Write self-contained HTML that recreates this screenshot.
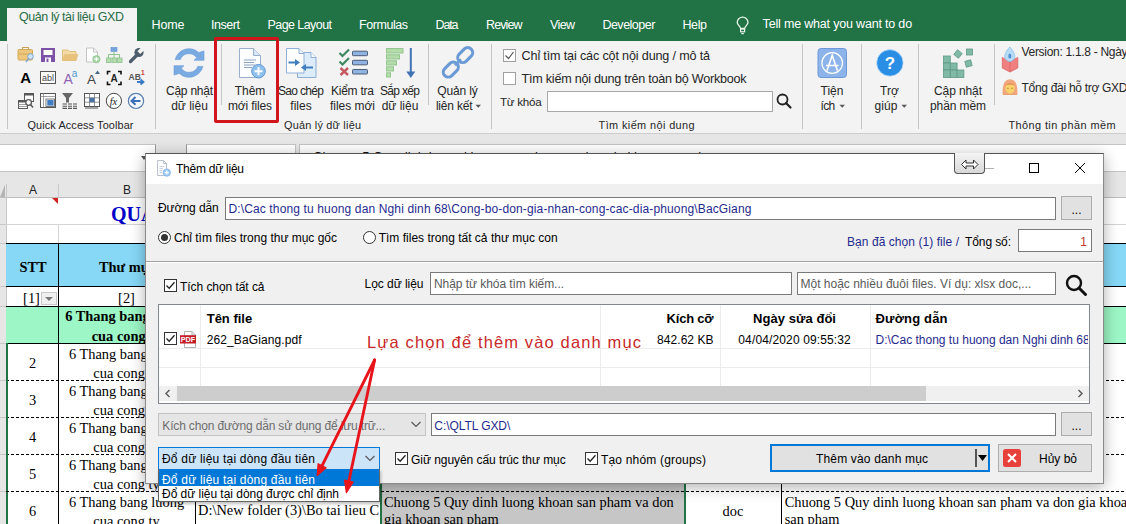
<!DOCTYPE html>
<html><head><meta charset="utf-8"><style>
html,body{margin:0;padding:0;}
body{width:1126px;height:524px;overflow:hidden;position:relative;background:#fff;font-family:"Liberation Sans",sans-serif;}
.t{position:absolute;white-space:pre;}

</style></head><body>
<div style="position:absolute;left:0px;top:133px;width:1126px;height:11px;background:#e6e6e6;"></div>
<div style="position:absolute;left:0px;top:144px;width:1126px;height:28px;background:#e6e6e6;"></div>
<div style="position:absolute;left:0px;top:144px;width:156px;height:28px;background:#fff;border:1px solid #c4c4c4;border-left:none;border-right-color:#9a9a9a;box-sizing:border-box;"></div>
<div style="position:absolute;left:186px;top:144px;width:110px;height:28px;background:#fff;border:1px solid #c4c4c4;border-left-color:#9a9a9a;box-sizing:border-box;"></div>
<div style="position:absolute;left:299px;top:144px;width:827px;height:28px;background:#fff;border:1px solid #c4c4c4;border-right:none;box-sizing:border-box;"></div>
<div class="t" style="left:313.00px;top:147.30px;font-size:13px;line-height:20px;color:#111;">Chuong 5 Quy dinh luong khoan san pham va don gia khoan san pham</div>
<svg style="position:absolute;left:140px;top:155px" width="8" height="6"><polygon points="1,1 7,1 4,5" fill="#555"/></svg>
<div style="position:absolute;left:0px;top:172px;width:1126px;height:26px;background:#e6e6e6;border-bottom:1px solid #bdbdbd;box-sizing:border-box;"></div>
<div style="position:absolute;left:6px;top:184px;width:1px;height:14px;background:#c8c8c8;"></div>
<div style="position:absolute;left:58px;top:184px;width:1px;height:14px;background:#c8c8c8;"></div>
<div class="t" style="left:28.99px;top:180.34px;font-size:12px;line-height:20px;color:#222;">A</div>
<div class="t" style="left:122.99px;top:180.34px;font-size:12px;line-height:20px;color:#222;">B</div>
<svg style="position:absolute;left:0;top:184px" width="6" height="14"><polygon points="5,1 5,13 0,13" fill="#b4b4b4"/></svg>
<div style="position:absolute;left:0px;top:198px;width:7px;height:326px;background:#e6e6e6;border-right:1px solid #c8c8c8;box-sizing:border-box;"></div>
<div style="position:absolute;left:0px;top:224px;width:6px;height:1px;background:#c8c8c8;"></div>
<div style="position:absolute;left:0px;top:243px;width:6px;height:1px;background:#c8c8c8;"></div>
<div style="position:absolute;left:0px;top:286px;width:6px;height:1px;background:#c8c8c8;"></div>
<div style="position:absolute;left:0px;top:306px;width:6px;height:1px;background:#c8c8c8;"></div>
<div style="position:absolute;left:0px;top:343px;width:6px;height:1px;background:#c8c8c8;"></div>
<div style="position:absolute;left:0px;top:380px;width:6px;height:1px;background:#c8c8c8;"></div>
<div style="position:absolute;left:0px;top:417px;width:6px;height:1px;background:#c8c8c8;"></div>
<div style="position:absolute;left:0px;top:454px;width:6px;height:1px;background:#c8c8c8;"></div>
<div style="position:absolute;left:0px;top:491px;width:6px;height:1px;background:#c8c8c8;"></div>
<svg style="position:absolute;left:52px;top:198px" width="6" height="6"><polygon points="0,0 6,0 6,6" fill="#d32020"/></svg>
<div style="position:absolute;left:6px;top:224px;width:1120px;height:1px;background:#d4d4d4;"></div>
<div style="position:absolute;left:58px;top:224px;width:1px;height:19px;background:#d4d4d4;"></div>
<div style="position:absolute;left:6px;top:243px;width:1120px;height:43px;background:#86d8f6;"></div>
<div style="position:absolute;left:6px;top:243px;width:1120px;height:1px;background:#000;"></div>
<div style="position:absolute;left:6px;top:286px;width:1120px;height:1px;background:#000;"></div>
<div style="position:absolute;left:6px;top:306px;width:1120px;height:1px;background:#000;"></div>
<div style="position:absolute;left:6px;top:307px;width:1120px;height:36px;background:#9cf6c5;"></div>
<div style="position:absolute;left:6px;top:343px;width:1120px;height:1px;background:#000;"></div>
<div style="position:absolute;left:58px;top:243px;width:1px;height:281px;background:#000;"></div>
<div style="position:absolute;left:6px;top:380px;width:1120px;height:1px;background:repeating-linear-gradient(90deg,#000 0 3px,transparent 3px 5px);"></div>
<div style="position:absolute;left:6px;top:417px;width:1120px;height:1px;background:repeating-linear-gradient(90deg,#000 0 3px,transparent 3px 5px);"></div>
<div style="position:absolute;left:6px;top:454px;width:1120px;height:1px;background:repeating-linear-gradient(90deg,#000 0 3px,transparent 3px 5px);"></div>
<div style="position:absolute;left:6px;top:491px;width:1120px;height:1px;background:repeating-linear-gradient(90deg,#000 0 3px,transparent 3px 5px);"></div>
<div style="position:absolute;left:6px;top:343px;width:2px;height:181px;background:#217346;"></div>
<div style="position:absolute;left:381px;top:484px;width:304px;height:40px;background:#c6c6c6;"></div>
<div style="position:absolute;left:380px;top:484px;width:2px;height:40px;background:#217346;"></div>
<div style="position:absolute;left:684px;top:484px;width:2px;height:40px;background:#217346;"></div>
<div style="position:absolute;left:195px;top:484px;width:1px;height:40px;background:#000;"></div>
<div style="position:absolute;left:781px;top:484px;width:1px;height:40px;background:#000;"></div>
<div style="position:absolute;left:6px;top:491px;width:1120px;height:1px;background:repeating-linear-gradient(90deg,#000 0 3px,transparent 3px 5px);"></div>
<div class="t" style="left:111.00px;top:198.05px;font-size:20px;line-height:32px;color:#0000c8;font-weight:700;font-family:'Liberation Serif';">QUA</div>
<div class="t" style="left:19.40px;top:254.64px;font-size:14.4px;line-height:24px;color:#000;font-weight:700;font-family:'Liberation Serif';">STT</div>
<div class="t" style="left:98.89px;top:254.64px;font-size:14.4px;line-height:24px;color:#000;font-weight:700;font-family:'Liberation Serif';">Thư mục</div>
<div class="t" style="left:23.11px;top:286.14px;font-size:14.4px;line-height:24px;color:#000;font-family:'Liberation Serif';">[1]</div>
<div style="position:absolute;left:41px;top:292px;width:16px;height:13px;background:#f0f0f0;border:1px solid #c8c8c8;box-sizing:border-box;"></div>
<svg style="position:absolute;left:41px;top:292px" width="16" height="13"><polygon points="4,5 12,5 8,9" fill="#7a7a7a"/></svg>
<div class="t" style="left:118.11px;top:286.14px;font-size:14.4px;line-height:24px;color:#000;font-family:'Liberation Serif';">[2]</div>
<div class="t" style="left:65.23px;top:304.44px;font-size:14.4px;line-height:24px;color:#000;font-weight:700;font-family:'Liberation Serif';">6 Thang bang luong</div>
<div class="t" style="left:91.72px;top:323.94px;font-size:14.4px;line-height:24px;color:#000;font-weight:700;font-family:'Liberation Serif';">cua cong ty</div>
<div class="t" style="left:28.90px;top:350.94px;font-size:14.4px;line-height:24px;color:#000;font-family:'Liberation Serif';">2</div>
<div class="t" style="left:68.88px;top:341.74px;font-size:14.4px;line-height:24px;color:#000;font-family:'Liberation Serif';">6 Thang bang luong</div>
<div class="t" style="left:93.33px;top:360.54px;font-size:14.4px;line-height:24px;color:#000;font-family:'Liberation Serif';">cua cong ty</div>
<div class="t" style="left:28.90px;top:387.94px;font-size:14.4px;line-height:24px;color:#000;font-family:'Liberation Serif';">3</div>
<div class="t" style="left:68.88px;top:378.74px;font-size:14.4px;line-height:24px;color:#000;font-family:'Liberation Serif';">6 Thang bang luong</div>
<div class="t" style="left:93.33px;top:397.54px;font-size:14.4px;line-height:24px;color:#000;font-family:'Liberation Serif';">cua cong ty</div>
<div class="t" style="left:28.90px;top:424.94px;font-size:14.4px;line-height:24px;color:#000;font-family:'Liberation Serif';">4</div>
<div class="t" style="left:68.88px;top:415.74px;font-size:14.4px;line-height:24px;color:#000;font-family:'Liberation Serif';">6 Thang bang luong</div>
<div class="t" style="left:93.33px;top:434.54px;font-size:14.4px;line-height:24px;color:#000;font-family:'Liberation Serif';">cua cong ty</div>
<div class="t" style="left:28.90px;top:461.94px;font-size:14.4px;line-height:24px;color:#000;font-family:'Liberation Serif';">5</div>
<div class="t" style="left:68.88px;top:452.74px;font-size:14.4px;line-height:24px;color:#000;font-family:'Liberation Serif';">6 Thang bang luong</div>
<div class="t" style="left:93.33px;top:471.54px;font-size:14.4px;line-height:24px;color:#000;font-family:'Liberation Serif';">cua cong ty</div>
<div class="t" style="left:28.90px;top:498.94px;font-size:14.4px;line-height:24px;color:#000;font-family:'Liberation Serif';">6</div>
<div class="t" style="left:68.88px;top:489.74px;font-size:14.4px;line-height:24px;color:#000;font-family:'Liberation Serif';">6 Thang bang luong</div>
<div class="t" style="left:93.33px;top:508.54px;font-size:14.4px;line-height:24px;color:#000;font-family:'Liberation Serif';">cua cong ty</div>
<div class="t" style="left:198.00px;top:497.74px;font-size:14.4px;line-height:24px;color:#000;font-family:'Liberation Serif';width:182.00px;overflow:hidden;">D:\New folder (3)\Bo tai lieu C</div>
<div class="t" style="left:384.00px;top:489.54px;font-size:14.4px;line-height:24px;color:#000;font-family:'Liberation Serif';">Chuong 5 Quy dinh luong khoan san pham va don</div>
<div class="t" style="left:384.00px;top:507.14px;font-size:14.4px;line-height:24px;color:#000;font-family:'Liberation Serif';">gia khoan san pham</div>
<div class="t" style="left:722.61px;top:498.74px;font-size:14.4px;line-height:24px;color:#000;font-family:'Liberation Serif';">doc</div>
<div class="t" style="left:784.70px;top:489.54px;font-size:14.4px;line-height:24px;color:#000;font-family:'Liberation Serif';">Chuong 5 Quy dinh luong khoan san pham va don gia khoan</div>
<div class="t" style="left:784.70px;top:507.14px;font-size:14.4px;line-height:24px;color:#000;font-family:'Liberation Serif';">san pham</div>
<div style="position:absolute;left:0px;top:0px;width:1126px;height:41px;background:#217346;"></div>
<div style="position:absolute;left:7px;top:8px;width:130px;height:34px;background:#f3f3f3;"></div>
<div class="t" style="left:19.00px;top:6.67px;font-size:12.5px;line-height:20px;color:#2a6e47;letter-spacing:-0.434px;">Quản lý tài liệu GXD</div>
<div class="t" style="left:151.50px;top:14.67px;font-size:12.5px;line-height:20px;color:#fff;letter-spacing:-0.115px;">Home</div>
<div class="t" style="left:211.00px;top:14.67px;font-size:12.5px;line-height:20px;color:#fff;letter-spacing:-0.453px;">Insert</div>
<div class="t" style="left:267.50px;top:14.67px;font-size:12.5px;line-height:20px;color:#fff;letter-spacing:-0.570px;">Page Layout</div>
<div class="t" style="left:359.00px;top:14.67px;font-size:12.5px;line-height:20px;color:#fff;letter-spacing:-0.442px;">Formulas</div>
<div class="t" style="left:435.50px;top:14.67px;font-size:12.5px;line-height:20px;color:#fff;letter-spacing:-1.135px;">Data</div>
<div class="t" style="left:486.00px;top:14.67px;font-size:12.5px;line-height:20px;color:#fff;letter-spacing:-0.900px;">Review</div>
<div class="t" style="left:550.00px;top:14.67px;font-size:12.5px;line-height:20px;color:#fff;letter-spacing:-0.625px;">View</div>
<div class="t" style="left:602.40px;top:14.67px;font-size:12.5px;line-height:20px;color:#fff;letter-spacing:-0.498px;">Developer</div>
<div class="t" style="left:682.50px;top:14.67px;font-size:12.5px;line-height:20px;color:#fff;letter-spacing:-0.406px;">Help</div>
<div class="t" style="left:762.60px;top:14.17px;font-size:12.5px;line-height:20px;color:#fff;letter-spacing:-0.183px;">Tell me what you want to do</div>
<div style="position:absolute;left:0px;top:41px;width:1126px;height:92px;background:#f3f3f3;"></div>
<div style="position:absolute;left:0px;top:133px;width:1126px;height:1px;background:#cdcdcd;"></div>
<div style="position:absolute;left:7px;top:44px;width:1px;height:85px;background:#c6c6c6;"></div>
<div style="position:absolute;left:155px;top:44px;width:1px;height:85px;background:#c6c6c6;"></div>
<div style="position:absolute;left:221px;top:44px;width:1px;height:61px;background:#c6c6c6;"></div>
<div style="position:absolute;left:428px;top:44px;width:1px;height:61px;background:#c6c6c6;"></div>
<div style="position:absolute;left:491px;top:44px;width:1px;height:85px;background:#c6c6c6;"></div>
<div style="position:absolute;left:802px;top:44px;width:1px;height:85px;background:#c6c6c6;"></div>
<div style="position:absolute;left:861px;top:44px;width:1px;height:85px;background:#c6c6c6;"></div>
<div style="position:absolute;left:918px;top:44px;width:1px;height:85px;background:#c6c6c6;"></div>
<div style="position:absolute;left:994px;top:44px;width:1px;height:61px;background:#c6c6c6;"></div>
<div class="t" style="left:27.50px;top:116.42px;font-size:10.9px;line-height:18px;color:#262626;letter-spacing:0.109px;">Quick Access Toolbar</div>
<div class="t" style="left:166.00px;top:81.14px;font-size:12px;line-height:20px;color:#262626;letter-spacing:-0.243px;">Cập nhật</div>
<div class="t" style="left:171.13px;top:96.24px;font-size:12px;line-height:20px;color:#262626;">dữ liệu</div>
<div class="t" style="left:234.66px;top:81.14px;font-size:12px;line-height:20px;color:#262626;">Thêm</div>
<div class="t" style="left:228.00px;top:96.24px;font-size:12px;line-height:20px;color:#262626;letter-spacing:-0.152px;">mới files</div>
<div class="t" style="left:278.00px;top:81.14px;font-size:12px;line-height:20px;color:#262626;letter-spacing:-0.674px;">Sao chép</div>
<div class="t" style="left:290.33px;top:96.24px;font-size:12px;line-height:20px;color:#262626;">files</div>
<div class="t" style="left:331.00px;top:81.14px;font-size:12px;line-height:20px;color:#262626;letter-spacing:-0.241px;">Kiểm tra</div>
<div class="t" style="left:330.00px;top:96.24px;font-size:12px;line-height:20px;color:#262626;letter-spacing:-0.027px;">files mới</div>
<div class="t" style="left:380.00px;top:81.14px;font-size:12px;line-height:20px;color:#262626;letter-spacing:-0.674px;">Sắp xếp</div>
<div class="t" style="left:381.63px;top:96.24px;font-size:12px;line-height:20px;color:#262626;">dữ liệu</div>
<div class="t" style="left:437.25px;top:81.14px;font-size:12px;line-height:20px;color:#262626;letter-spacing:-0.143px;">Quản lý</div>
<div class="t" style="left:435.90px;top:96.24px;font-size:12px;line-height:20px;color:#262626;letter-spacing:-0.190px;">liên kết</div>
<svg style="position:absolute;left:475px;top:104px" width="7" height="5"><polygon points="0.5,0.8 6,0.8 3.25,3.8" fill="#555"/></svg>
<div class="t" style="left:284.00px;top:116.42px;font-size:10.9px;line-height:18px;color:#262626;letter-spacing:0.222px;">Quản lý dữ liệu</div>
<div class="t" style="left:521.60px;top:46.43px;font-size:12.6px;line-height:20px;color:#262626;letter-spacing:-0.154px;">Chỉ tìm tại các cột nội dung / mô tả</div>
<div class="t" style="left:521.60px;top:69.23px;font-size:12.6px;line-height:20px;color:#262626;letter-spacing:-0.244px;">Tìm kiếm nội dung trên toàn bộ Workbook</div>
<div class="t" style="left:500.00px;top:92.58px;font-size:11.6px;line-height:18px;color:#262626;letter-spacing:-0.270px;">Từ khóa</div>
<div class="t" style="left:598.60px;top:116.42px;font-size:10.9px;line-height:18px;color:#262626;letter-spacing:0.400px;">Tìm kiếm nội dung</div>
<div class="t" style="left:820.55px;top:81.14px;font-size:12px;line-height:20px;color:#262626;">Tiện</div>
<div class="t" style="left:820.50px;top:96.24px;font-size:12px;line-height:20px;color:#262626;letter-spacing:-0.608px;">ích</div>
<svg style="position:absolute;left:838.5px;top:104px" width="7" height="5"><polygon points="0.5,0.8 6,0.8 3.25,3.8" fill="#555"/></svg>
<div class="t" style="left:880.12px;top:81.14px;font-size:12px;line-height:20px;color:#262626;">Trợ</div>
<div class="t" style="left:874.50px;top:96.24px;font-size:12px;line-height:20px;color:#262626;letter-spacing:0.038px;">giúp</div>
<svg style="position:absolute;left:900.5px;top:104px" width="7" height="5"><polygon points="0.5,0.8 6,0.8 3.25,3.8" fill="#555"/></svg>
<div class="t" style="left:934.00px;top:81.14px;font-size:12px;line-height:20px;color:#262626;letter-spacing:-0.100px;">Cập nhật</div>
<div class="t" style="left:930.00px;top:96.24px;font-size:12px;line-height:20px;color:#262626;letter-spacing:-0.100px;">phần mềm</div>
<div class="t" style="left:1021.50px;top:42.34px;font-size:12px;line-height:20px;color:#262626;letter-spacing:-0.3px;">Version: 1.1.8 - Ngày cập nhật</div>
<div class="t" style="left:1021.50px;top:77.54px;font-size:12px;line-height:20px;color:#262626;letter-spacing:-0.293px;">Tổng đài hỗ trợ GXD</div>
<div class="t" style="left:1008.50px;top:116.42px;font-size:10.9px;line-height:18px;color:#262626;letter-spacing:0.418px;">Thông tin phần mềm</div>
<div style="position:absolute;left:503px;top:49px;width:13px;height:13px;border:1px solid #a0a0a0;background:#fff;box-sizing:border-box;"></div>
<div style="position:absolute;left:503px;top:72px;width:13px;height:13px;border:1px solid #a0a0a0;background:#fff;box-sizing:border-box;"></div>
<svg style="position:absolute;left:503px;top:49px" width="13" height="13"><polyline points="2.5,6.5 5.5,9.5 10.5,3" fill="none" stroke="#555" stroke-width="1.2"/></svg>
<div style="position:absolute;left:547px;top:91px;width:226px;height:21px;border:1px solid #a8a8a8;background:#fff;box-sizing:border-box;"></div>
<svg style="position:absolute;left:775px;top:92px" width="18" height="18"><circle cx="7.5" cy="7.5" r="5" fill="none" stroke="#222" stroke-width="1.8"/><line x1="11" y1="11" x2="15.5" y2="15.5" stroke="#222" stroke-width="2.2" stroke-linecap="round"/></svg>
<div style="position:absolute;left:214px;top:37px;width:65px;height:86px;border:3px solid #d2141c;box-sizing:border-box;border-radius:2px;"></div>
<svg style="position:absolute;left:734px;top:15px" width="18" height="22" viewBox="734 14 18 22">
<path d="M740.6 27.5 C740.4 25.2 737.2 23.8 737.2 21.5 A5.4 5.4 0 0 1 748 21.5 C748 23.8 744.8 25.2 744.6 27.5 Z" fill="none" stroke="#e6f5e8" stroke-width="1.3"/>
<rect x="740.6" y="28" width="4" height="2.8" fill="none" stroke="#e6f5e8" stroke-width="1.2"/>
<line x1="741.3" y1="32.6" x2="743.9" y2="32.6" stroke="#e6f5e8" stroke-width="1.2"/>
</svg>
<svg style="position:absolute;left:0px;top:40px;overflow:visible" width="160" height="75" viewBox="0 0 160 75">
<g transform="translate(0,-40)">
<!-- briefcase -->
<rect x="22.5" y="47.5" width="6" height="3" fill="none" stroke="#c9a25a" stroke-width="1"/>
<rect x="18" y="49.5" width="14.5" height="10.5" rx="1" fill="#eec77c" stroke="#d2a85a" stroke-width="1"/>
<line x1="18" y1="54" x2="32.5" y2="54" stroke="#d2a85a"/>
<circle cx="30.5" cy="56.5" r="2.8" fill="#cfe6f7" stroke="#7aa6cf" stroke-width="1"/>
<line x1="28.6" y1="58.6" x2="26" y2="62" stroke="#7aa6cf" stroke-width="1.5"/>
<!-- floppy -->
<rect x="41" y="48" width="14" height="14" fill="#7b52a6"/>
<rect x="43.5" y="50" width="9" height="5" fill="#fff"/>
<rect x="45" y="57.5" width="6" height="4.5" fill="#fff"/>
<rect x="46.5" y="58.5" width="2" height="3.5" fill="#7b52a6"/>
<!-- folder -->
<path d="M62.5 50 H68 L69.5 51.5 H76 V60.5 H62.5 Z" fill="#f3dba8" stroke="#e2c07a" stroke-width="1"/>
<path d="M62.5 60.5 L64.5 54.5 H78 L76 60.5 Z" fill="#e9c27b" stroke="#e2c07a" stroke-width="0.6"/>
<!-- doc plus -->
<path d="M86.5 48 H93.5 L97.5 52 V62 H86.5 Z" fill="#fff" stroke="#c4c4c4" stroke-width="1"/>
<path d="M93.5 48 V52 H97.5" fill="none" stroke="#c4c4c4"/>
<circle cx="96.4" cy="59.2" r="3.6" fill="#a9d6a9" stroke="#8cc08c" stroke-width="0.8"/>
<path d="M96.4 57.2 V61.2 M94.4 59.2 H98.4" stroke="#fff" stroke-width="1.2"/>
<!-- org chart -->
<rect x="111" y="47.5" width="6" height="4" fill="#77a3dc" stroke="#5e8fcf" stroke-width="0.6"/>
<path d="M114 51.5 V54.5 M108.5 54.5 H119.5 M108.5 54.5 V58 M114 54.5 V58 M119.5 54.5 V58" stroke="#8cc08c" stroke-width="1" fill="none"/>
<rect x="106.5" y="58" width="4.5" height="4.5" fill="#b5deb0" stroke="#8cc08c" stroke-width="0.8"/>
<rect x="112" y="58" width="4.5" height="4.5" fill="#b5deb0" stroke="#8cc08c" stroke-width="0.8"/>
<rect x="117.5" y="58" width="4.5" height="4.5" fill="#b5deb0" stroke="#8cc08c" stroke-width="0.8"/>
<!-- wrench -->
<path d="M130.5 61.5 L137 55" stroke="#4e5d6c" stroke-width="3.2" stroke-linecap="round"/>
<circle cx="139" cy="52.5" r="4.6" fill="#4e5d6c"/>
<rect x="139" y="47.5" width="4" height="6" fill="#f3f3f3" transform="rotate(45 141 50.5)"/>
<!-- row2: bold A -->
<text x="25.6" y="83" font-family="Liberation Sans" font-weight="700" font-size="15" text-anchor="middle" fill="#000">A</text>
<!-- ab| box -->
<rect x="40.5" y="71.5" width="15" height="12" fill="#fff" stroke="#555" stroke-width="1"/>
<text x="42" y="81" font-family="Liberation Sans" font-size="9" fill="#444">abl</text>
<!-- A^a purple -->
<text x="63.5" y="83.5" font-family="Liberation Sans" font-size="14" fill="#8e63b5">A</text>
<text x="71.8" y="76.6" font-family="Liberation Sans" font-size="10" fill="#4b9ad5">a</text>
<!-- A with triangle -->
<text x="87" y="83.5" font-family="Liberation Sans" font-size="13.5" fill="#444">A</text>
<polygon points="95,74 97.5,70.5 100,74" fill="#4a6a8a"/>
<!-- [A] -->
<path d="M107.5 74.5 V71.5 H110.5 M118 71.5 H121 V74.5 M121 81.5 V84.5 H118 M110.5 84.5 H107.5 V81.5" fill="none" stroke="#111" stroke-width="1.6"/>
<text x="114.2" y="82" font-family="Liberation Sans" font-size="10" font-weight="700" text-anchor="middle" fill="#222">A</text>
<!-- AB1 arrow -->
<text x="128.5" y="80" font-family="Liberation Sans" font-size="8.5" font-weight="700" fill="#555">AB</text>
<text x="141" y="74.5" font-family="Liberation Sans" font-size="6.5" font-weight="700" fill="#d03030">1</text>
<path d="M137 82 H143 M140.5 79.5 L143.5 82 L140.5 84.5" fill="none" stroke="#3b7bc4" stroke-width="1.8"/>
<!-- row3: table magnifier -->
<rect x="24.5" y="93.5" width="9" height="8" fill="#fff" stroke="#595959" stroke-width="1"/>
<rect x="24.5" y="93.5" width="9" height="2" fill="#595959"/>
<rect x="18.5" y="100.5" width="9" height="8" fill="#fff" stroke="#595959" stroke-width="1"/>
<rect x="18.5" y="100.5" width="9" height="2" fill="#595959"/>
<path d="M18.5 104.5 H27.5 M18.5 106.5 H27.5" stroke="#888" stroke-width="0.8"/>
<circle cx="28.6" cy="102.5" r="2.8" fill="#fff" stroke="#595959" stroke-width="1.3"/>
<line x1="30.5" y1="104.5" x2="33" y2="107.5" stroke="#595959" stroke-width="1.6"/>
<!-- grid w/ blue -->
<rect x="40.5" y="93.5" width="15" height="14" fill="#fff" stroke="#555" stroke-width="1"/>
<path d="M40.5 96.5 H55.5 M43.5 93.5 V107.5" stroke="#888" stroke-width="0.8"/>
<rect x="46" y="99" width="8.5" height="7.5" fill="#fff" stroke="#555" stroke-width="0.8"/>
<rect x="47.3" y="100" width="6.3" height="5.6" fill="#3f7cc4"/>
<!-- funnel -->
<path d="M62 93 H73 L69 98 V102.5 H66 V98 Z" fill="#666"/>
<path d="M62.5 104 H67 M68 104 H72 M73 104 H77 M62.5 106.2 H67 M68 106.2 H72 M73 106.2 H77 M62.5 108.4 H67 M68 108.4 H72 M73 108.4 H77" stroke="#555" stroke-width="1.1"/>
<!-- grid selection -->
<rect x="84.5" y="93.5" width="15" height="13" fill="#fff" stroke="#555" stroke-width="1"/>
<path d="M89.5 93.5 V106.5 M94.5 93.5 V106.5 M84.5 97.8 H99.5 M84.5 102.2 H99.5" stroke="#777" stroke-width="0.8"/>
<rect x="89.5" y="97.8" width="5" height="4.4" fill="#4a73a8"/>
<path d="M85 108 H98" stroke="#555" stroke-width="1"/>
<!-- fx -->
<circle cx="113.9" cy="100.9" r="7.6" fill="#fff" stroke="#444" stroke-width="1"/>
<text x="113.5" y="104.5" font-family="Liberation Serif" font-style="italic" font-size="10.5" text-anchor="middle" fill="#222">fx</text>
<!-- back arrow circle -->
<circle cx="136" cy="100.9" r="7.6" fill="#f4f9ff" stroke="#5a7fb0" stroke-width="1.2"/>
<path d="M140.5 100.9 H132 M135.5 97 L131.5 100.9 L135.5 104.8" fill="none" stroke="#3b6fb6" stroke-width="2"/>
</g></svg>
<svg style="position:absolute;left:168px;top:42px;overflow:visible" width="44" height="42" viewBox="0 0 44 42"><g transform="translate(-168,-42)" fill="#7aaae2" stroke="#6a9bd8" stroke-width="0.6" stroke-linejoin="round">
<path d="M175.1 59.6 A14.3 14.3 0 0 1 198.7 52.5 L204 50.9 L204 60.3 L194 60.3 L196.7 57.8 A9.3 9.3 0 0 0 180.3 59.6 Z"/>
<path d="M202.9 66.4 A14.3 14.3 0 0 1 179.3 73.5 L174 75.1 L174 65.7 L184 65.7 L181.3 68.2 A9.3 9.3 0 0 0 197.7 66.4 Z"/>
</g></svg>
<svg style="position:absolute;left:236px;top:46px;overflow:visible" width="34" height="34" viewBox="0 0 34 34"><g transform="translate(-236,-46)">
<path d="M239.5 48.5 H253.5 L260.5 55.5 V77.5 H239.5 Z" fill="#fdfeff" stroke="#9aaecb" stroke-width="1"/>
<path d="M253.5 48.5 V55.5 H260.5" fill="#d8e8f8" stroke="#9aaecb" stroke-width="1"/>
<path d="M244 60 H256 M244 62.5 H254 M244 65 H255 M244 67.5 H252" stroke="#8ca2bf" stroke-width="1"/>
<circle cx="258.5" cy="71.2" r="6.8" fill="#8fc0ec" stroke="#5f9ad3" stroke-width="1"/>
<path d="M258.5 67.2 V75.2 M254.5 71.2 H262.5" stroke="#fff" stroke-width="2"/>
</g></svg>
<svg style="position:absolute;left:284px;top:46px;overflow:visible" width="34" height="34" viewBox="0 0 34 34"><g transform="translate(-284,-46)">
<path d="M297.5 52.5 H311 L316 57.5 V77.5 H297.5 Z" fill="#dcecfa" stroke="#8fb0d6" stroke-width="1"/>
<path d="M311 52.5 V57.5 H316" fill="#fff" stroke="#8fb0d6"/>
<path d="M286.5 48.5 H299 L304 53.5 V73 H286.5 Z" fill="#fff" stroke="#8fb0d6" stroke-width="1"/>
<path d="M299 48.5 V53.5 H304" fill="#e8f2fb" stroke="#8fb0d6"/>
<path d="M288.5 62.5 H296" stroke="#3f7fc0" stroke-width="2"/><polygon points="295,59 300,62.5 295,66" fill="#3f7fc0"/>
<path d="M305 67.5 H313" stroke="#3f7fc0" stroke-width="2"/><polygon points="306,64 301,67.5 306,71" fill="#3f7fc0"/>
</g></svg>
<svg style="position:absolute;left:336px;top:46px;overflow:visible" width="36" height="34" viewBox="0 0 36 34"><g transform="translate(-336,-46)">
<polyline points="339.5,53 342.5,56 349,49.5" fill="none" stroke="#3d8a60" stroke-width="2.2"/>
<polyline points="339.5,61.5 342.5,64.5 349,58" fill="none" stroke="#3d8a60" stroke-width="2.2"/>
<path d="M340.5 68 L348 75 M348 68 L340.5 75" stroke="#c65a62" stroke-width="2.4"/>
<rect x="352.5" y="51.2" width="15" height="4.5" rx="0.8" fill="#8fb4e3" stroke="#4d5d73" stroke-width="1"/>
<rect x="352.5" y="60.3" width="15" height="4.5" rx="0.8" fill="#8fb4e3" stroke="#4d5d73" stroke-width="1"/>
<rect x="352.5" y="69.5" width="15" height="4.5" rx="0.8" fill="#8fb4e3" stroke="#4d5d73" stroke-width="1"/>
</g></svg>
<svg style="position:absolute;left:384px;top:46px;overflow:visible" width="34" height="34" viewBox="0 0 34 34"><g transform="translate(-384,-46)">
<rect x="386.5" y="48.5" width="16.5" height="4.5" fill="#b3dcaa" stroke="#93c78e" stroke-width="1"/>
<rect x="386.5" y="54.8" width="13" height="4.2" fill="#b3dcaa" stroke="#93c78e" stroke-width="1"/>
<rect x="386.5" y="60.8" width="10" height="4.2" fill="#b3dcaa" stroke="#93c78e" stroke-width="1"/>
<rect x="386.5" y="66.8" width="7" height="4.2" fill="#b3dcaa" stroke="#93c78e" stroke-width="1"/>
<rect x="386.5" y="72.8" width="4" height="4.2" fill="#b3dcaa" stroke="#93c78e" stroke-width="1"/>
<line x1="410.8" y1="48" x2="410.8" y2="73" stroke="#4173b4" stroke-width="2"/>
<polygon points="406.3,71.5 415.3,71.5 410.8,78" fill="#4173b4"/>
</g></svg>
<svg style="position:absolute;left:440px;top:46px;overflow:visible" width="36" height="34" viewBox="0 0 36 34"><g transform="translate(-440,-46)">
<rect x="456.7" y="50.1" width="17" height="10" rx="5" transform="rotate(-45 465.2 55.1)" fill="none" stroke="#6b9bd6" stroke-width="3.1"/>
<rect x="442.3" y="64.6" width="17" height="10" rx="5" transform="rotate(-45 450.8 69.6)" fill="none" stroke="#6b9bd6" stroke-width="3.1"/>
<line x1="455" y1="65.4" x2="461" y2="59.4" stroke="#6b9bd6" stroke-width="2.6"/>
</g></svg>
<svg style="position:absolute;left:816px;top:46px;overflow:visible" width="32" height="34" viewBox="0 0 32 34"><g transform="translate(-816,-46)">
<rect x="818" y="48.5" width="28.5" height="29" rx="3" fill="#8db4ea" stroke="#6c98d8" stroke-width="1"/>
<circle cx="832.2" cy="63" r="10.3" fill="none" stroke="#fff" stroke-width="1.2"/>
<path d="M827 70.5 L832.2 55.5 L837.4 70.5 M826 65.5 H838.5" fill="none" stroke="#fff" stroke-width="1.6"/>
</g></svg>
<svg style="position:absolute;left:874px;top:47px;overflow:visible" width="32" height="32" viewBox="0 0 32 32"><g transform="translate(-874,-47)">
<circle cx="889.9" cy="62.9" r="13.3" fill="#2b8ee5" stroke="#c9e3fa" stroke-width="0.8"/>
<text x="889.9" y="68.8" font-family="Liberation Sans" font-weight="700" font-size="17" text-anchor="middle" fill="#fff">?</text>
</g></svg>
<svg style="position:absolute;left:940px;top:46px;overflow:visible" width="38" height="34" viewBox="0 0 38 34"><g transform="translate(-940,-46)" fill="#80b9a5" stroke="#5f9a86" stroke-width="0.8">
<rect x="943.5" y="56" width="6.8" height="7"/>
<rect x="943.5" y="63" width="6.8" height="7"/><rect x="950.3" y="63" width="6.8" height="7"/>
<rect x="943.5" y="70" width="6.8" height="7.5"/><rect x="950.3" y="70" width="6.8" height="7.5"/><rect x="957.1" y="70" width="6.8" height="7.5"/>
<rect x="955" y="51" width="6" height="6" transform="rotate(40 958 54)"/>
<rect x="966.5" y="49" width="6" height="6"/>
<rect x="965.5" y="60.5" width="6" height="6" transform="rotate(-15 968.5 63.5)"/>
</g></svg>
<svg style="position:absolute;left:1000px;top:45px;overflow:visible" width="20" height="30" viewBox="0 0 20 30"><g transform="translate(-1000,-45)">
<path d="M1010 72 L1002.3 68 V57.5 L1010 61.5 L1017.8 57.5 V68 Z" fill="#f27f7f" stroke="#d86262" stroke-width="0.8"/>
<line x1="1010" y1="61.5" x2="1010" y2="72" stroke="#d86262" stroke-width="0.8"/>
<path d="M1009.8 47 C1006 51 1004.8 54 1004.8 56.5 A5 5 0 0 0 1014.8 56.5 C1014.8 54 1013.5 51 1009.8 47 Z" fill="#b9dcf6" stroke="#8cbce6" stroke-width="0.8"/>
<ellipse cx="1009.8" cy="56" rx="1.5" ry="2.5" fill="#4f8fcf"/>
</g></svg>
<svg style="position:absolute;left:1000px;top:77px;overflow:visible" width="20" height="20" viewBox="0 0 20 20"><g transform="translate(-1000,-77)">
<path d="M1002.5 94.5 C1002.5 88 1002.8 79.3 1010 79.3 C1017.2 79.3 1017.5 88 1017.5 94.5 Z" fill="#f2a77c"/>
<path d="M1005.5 88 C1005.5 84.5 1007 83 1010 83 C1013 83 1014.5 84.5 1014.5 88 C1014.5 91.5 1012.5 93.5 1010 93.5 C1007.5 93.5 1005.5 91.5 1005.5 88 Z" fill="#f7d36a"/>
<path d="M1005 86 C1006.5 82 1013.5 82 1015 86 C1013 84.3 1007 84.3 1005 86 Z" fill="#e58d5c"/>
<path d="M1007.3 88.3 H1008.6 M1011.4 88.3 H1012.7" stroke="#8a5a2a" stroke-width="0.8"/>
<path d="M1003 94.5 H1017" stroke="#e9a070" stroke-width="1"/>
</g></svg>
<div style="position:absolute;left:145px;top:153px;width:959px;height:331px;background:#f0f0f0;border:1px solid #8a8a8a;border-top-color:#555;box-sizing:border-box;box-shadow:0 3px 14px rgba(0,0,0,0.32);"></div>
<div style="position:absolute;left:146px;top:154px;width:957px;height:30px;background:#fff;"></div>
<div class="t" style="left:176.00px;top:158.84px;font-size:12px;line-height:20px;color:#000;letter-spacing:-0.249px;">Thêm dữ liệu</div>
<svg style="position:absolute;left:156px;top:160px" width="15" height="17" viewBox="0 0 15 17">
<path d="M1.5 0.5 H7.5 L10.5 3.5 V9 M1.5 0.5 V15.5 H8" fill="none" stroke="#b9c3d0" stroke-width="1"/>
<path d="M7.5 0.5 V3.5 H10.5" fill="none" stroke="#b9c3d0"/>
<path d="M3.5 6.5 H8 M3.5 8.5 H7 M3.5 10.5 H6.5 M3.5 12.5 H6" stroke="#c9d2de" stroke-width="1"/>
<circle cx="10.8" cy="12.6" r="3.7" fill="#9fcbf2" stroke="#7db3e6" stroke-width="0.8"/>
<path d="M10.8 10.6 V14.6 M8.8 12.6 H12.8" stroke="#fff" stroke-width="1.1"/>
</svg>
<div style="position:absolute;left:954px;top:153px;width:31px;height:21px;box-sizing:border-box;border:1.5px solid #555;border-top:none;border-radius:0 0 4px 4px;background:linear-gradient(#f4f4f4,#d8d8d8);"></div>
<svg style="position:absolute;left:954px;top:153px" width="42" height="20" viewBox="0 0 42 20">
<path d="M7.5 11.5 L12 7 V10 H19.5 V7 L24 11.5 L19.5 16 V13 H12 V16 Z" fill="#fff" stroke="#333" stroke-width="1" stroke-linejoin="miter"/>
<line x1="31" y1="15.5" x2="40" y2="15.5" stroke="#b0b0b0"/>
</svg>
<svg style="position:absolute;left:1028px;top:162px" width="12" height="12"><rect x="1.5" y="1.5" width="9" height="9" fill="none" stroke="#000" stroke-width="1"/></svg>
<svg style="position:absolute;left:1074px;top:162px" width="12" height="12"><path d="M1 1 L11 11 M11 1 L1 11" stroke="#000" stroke-width="1"/></svg>
<div class="t" style="left:158.00px;top:198.34px;font-size:12px;line-height:20px;color:#000;letter-spacing:-0.060px;">Đường dẫn</div>
<div style="position:absolute;left:225px;top:197px;width:831px;height:23px;background:#fff;border:1px solid #7a7a7a;box-sizing:border-box;"></div>
<div class="t" style="left:228.40px;top:198.84px;font-size:12px;line-height:20px;color:#1f2a8e;letter-spacing:0.138px;">D:\Cac thong tu huong dan Nghi dinh 68\Cong-bo-don-gia-nhan-cong-cac-dia-phuong\BacGiang</div>
<div style="position:absolute;left:1061px;top:196px;width:31px;height:24px;background:#e1e1e1;border:1px solid #adadad;box-sizing:border-box;"></div>
<div class="t" style="left:1071.49px;top:199.84px;font-size:12px;line-height:20px;color:#000;">...</div>
<svg style="position:absolute;left:157px;top:230px" width="15" height="15"><circle cx="7.5" cy="7.5" r="6" fill="#fff" stroke="#333" stroke-width="1"/><circle cx="7.5" cy="7.5" r="3.5" fill="#333"/></svg>
<svg style="position:absolute;left:362px;top:230px" width="15" height="15"><circle cx="7.5" cy="7.5" r="6" fill="#fff" stroke="#333" stroke-width="1"/></svg>
<div class="t" style="left:174.00px;top:227.84px;font-size:12px;line-height:20px;color:#000;letter-spacing:-0.015px;">Chỉ tìm files trong thư mục gốc</div>
<div class="t" style="left:378.70px;top:227.84px;font-size:12px;line-height:20px;color:#000;letter-spacing:0.007px;">Tìm files trong tất cả thư mục con</div>
<div class="t" style="left:847.00px;top:231.64px;font-size:12px;line-height:20px;color:#1f2a8e;letter-spacing:0.060px;">Bạn đã chọn (1) file /</div>
<div class="t" style="left:965.00px;top:231.64px;font-size:12px;line-height:20px;color:#000;letter-spacing:-0.100px;">Tổng số:</div>
<div style="position:absolute;left:1018px;top:229px;width:74px;height:23px;background:#fff;border:1px solid #7a7a7a;box-sizing:border-box;"></div>
<div class="t" style="left:1080.31px;top:231.64px;font-size:12px;line-height:20px;color:#c0392b;">1</div>
<div style="position:absolute;left:146px;top:261px;width:957px;height:1px;background:#a0a0a0;"></div>
<div style="position:absolute;left:146px;top:262px;width:957px;height:1px;background:#fff;"></div>
<svg style="position:absolute;left:164px;top:279px" width="13" height="13"><rect x="0.5" y="0.5" width="12" height="12" fill="#fff" stroke="#333"/><polyline points="2.5,6.5 5.2,9.3 10.5,3.2" fill="none" stroke="#222" stroke-width="1.3"/></svg>
<div class="t" style="left:180.00px;top:276.84px;font-size:12px;line-height:20px;color:#000;letter-spacing:-0.059px;">Tích chọn tất cả</div>
<div class="t" style="left:364.50px;top:273.84px;font-size:12px;line-height:20px;color:#000;letter-spacing:-0.041px;">Lọc dữ liệu</div>
<div style="position:absolute;left:430px;top:272px;width:362px;height:23px;background:#fff;border:1px solid #7a7a7a;box-sizing:border-box;"></div>
<div class="t" style="left:434.00px;top:273.84px;font-size:12px;line-height:20px;color:#5a5a5a;letter-spacing:-0.062px;">Nhập từ khóa tìm kiếm...</div>
<div style="position:absolute;left:797px;top:272px;width:259px;height:23px;background:#fff;border:1px solid #7a7a7a;box-sizing:border-box;"></div>
<div class="t" style="left:800.50px;top:273.84px;font-size:12px;line-height:20px;color:#5a5a5a;">Một hoặc nhiều đuôi files. Ví dụ: xlsx doc,...</div>
<svg style="position:absolute;left:1064px;top:273px" width="24" height="24"><circle cx="10" cy="10" r="7" fill="none" stroke="#111" stroke-width="2.4"/><line x1="15" y1="15" x2="21.5" y2="21.5" stroke="#111" stroke-width="3" stroke-linecap="round"/></svg>
<div style="position:absolute;left:158px;top:304px;width:932px;height:100px;background:#fff;border:1px solid #828790;box-sizing:border-box;"></div>
<div style="position:absolute;left:200px;top:305px;width:1px;height:81px;background:#ececec;"></div>
<div style="position:absolute;left:600px;top:305px;width:1px;height:81px;background:#ececec;"></div>
<div style="position:absolute;left:720px;top:305px;width:1px;height:81px;background:#ececec;"></div>
<div style="position:absolute;left:870px;top:305px;width:1px;height:81px;background:#ececec;"></div>
<div style="position:absolute;left:159px;top:348px;width:930px;height:1px;background:#ececec;"></div>
<div style="position:absolute;left:159px;top:367px;width:930px;height:1px;background:#ececec;"></div>
<div class="t" style="left:206.70px;top:308.80px;font-size:13px;line-height:20px;color:#000;font-weight:700;">Tên file</div>
<div class="t" style="left:666.60px;top:308.80px;font-size:13px;line-height:20px;color:#000;font-weight:700;letter-spacing:-0.211px;">Kích cỡ</div>
<div class="t" style="left:753.00px;top:308.80px;font-size:13px;line-height:20px;color:#000;font-weight:700;letter-spacing:0.055px;">Ngày sửa đổi</div>
<div class="t" style="left:875.50px;top:308.80px;font-size:13px;line-height:20px;color:#000;font-weight:700;letter-spacing:0.168px;">Đường dẫn</div>
<svg style="position:absolute;left:164px;top:332px" width="13" height="13"><rect x="0.5" y="0.5" width="12" height="12" fill="#fff" stroke="#333"/><polyline points="2.5,6.5 5.2,9.3 10.5,3.2" fill="none" stroke="#222" stroke-width="1.3"/></svg>
<svg style="position:absolute;left:180px;top:331px" width="17" height="17" viewBox="0 0 17 17">
<path d="M4.5 0.5 H12 L15.5 4 V16.5 H4.5 Z" fill="#fff" stroke="#b0b0b0"/>
<path d="M12 0.5 V4 H15.5" fill="none" stroke="#b0b0b0"/>
<rect x="0" y="4.2" width="16" height="8.3" fill="#c41e28"/>
<text x="8" y="11.2" font-family="Liberation Sans" font-size="7.2" font-weight="700" fill="#fff" text-anchor="middle">PDF</text>
</svg>
<div class="t" style="left:206.70px;top:329.84px;font-size:12px;line-height:20px;color:#000;letter-spacing:0.113px;">262_BaGiang.pdf</div>
<div class="t" style="left:657.00px;top:330.34px;font-size:12px;line-height:20px;color:#000;letter-spacing:0.069px;">842.62 KB</div>
<div class="t" style="left:738.30px;top:330.34px;font-size:12px;line-height:20px;color:#000;letter-spacing:0.133px;">04/04/2020 09:55:32</div>
<div class="t" style="left:875.50px;top:330.34px;font-size:12px;line-height:20px;color:#1f2a8e;width:212.50px;overflow:hidden;">D:\Cac thong tu huong dan Nghi dinh 68\Cong</div>
<div style="position:absolute;left:159px;top:386px;width:930px;height:15px;background:#f0f0f0;"></div>
<div style="position:absolute;left:177px;top:386px;width:749px;height:15px;background:#cdcdcd;"></div>
<svg style="position:absolute;left:163px;top:388px" width="10" height="11"><polyline points="6.5,2 3,5.5 6.5,9" fill="none" stroke="#606060" stroke-width="1.5"/></svg>
<svg style="position:absolute;left:1075px;top:388px" width="10" height="11"><polyline points="3.5,2 7,5.5 3.5,9" fill="none" stroke="#606060" stroke-width="1.5"/></svg>
<div style="position:absolute;left:158px;top:413px;width:268px;height:23px;background:#e5e5e5;border:1px solid #c4c4c4;box-sizing:border-box;"></div>
<div class="t" style="left:162.30px;top:416.14px;font-size:12px;line-height:20px;color:#6d6d6d;letter-spacing:-0.162px;">Kích chọn đường dẫn sử dụng để lưu trữ...</div>
<svg style="position:absolute;left:410px;top:418px" width="12" height="12"><polyline points="1.5,4 6,8.5 10.5,4" fill="none" stroke="#555" stroke-width="1.1"/></svg>
<div style="position:absolute;left:431px;top:413px;width:625px;height:23px;background:#fff;border:1px solid #7a7a7a;box-sizing:border-box;"></div>
<div class="t" style="left:434.30px;top:415.84px;font-size:12px;line-height:20px;color:#1f2a8e;letter-spacing:-0.062px;">C:\QLTL GXD\</div>
<div style="position:absolute;left:1061px;top:412px;width:31px;height:24px;background:#e1e1e1;border:1px solid #adadad;box-sizing:border-box;"></div>
<div class="t" style="left:1071.49px;top:415.84px;font-size:12px;line-height:20px;color:#000;">...</div>
<div style="position:absolute;left:158px;top:447px;width:222px;height:23px;background:#cce4f7;border:1px solid #0078d7;box-sizing:border-box;"></div>
<div class="t" style="left:162.00px;top:448.84px;font-size:12px;line-height:20px;color:#000;letter-spacing:0.205px;">Đổ dữ liệu tại dòng đầu tiên</div>
<svg style="position:absolute;left:364px;top:452px" width="12" height="12"><polyline points="1.5,4 6,8.5 10.5,4" fill="none" stroke="#555" stroke-width="1.1"/></svg>
<svg style="position:absolute;left:395px;top:452px" width="13" height="13"><rect x="0.5" y="0.5" width="12" height="12" fill="#fff" stroke="#333"/><polyline points="2.5,6.5 5.2,9.3 10.5,3.2" fill="none" stroke="#222" stroke-width="1.3"/></svg>
<div class="t" style="left:411.00px;top:449.84px;font-size:12px;line-height:20px;color:#000;letter-spacing:-0.055px;">Giữ nguyên cấu trúc thư mục</div>
<svg style="position:absolute;left:585px;top:452px" width="13" height="13"><rect x="0.5" y="0.5" width="12" height="12" fill="#fff" stroke="#333"/><polyline points="2.5,6.5 5.2,9.3 10.5,3.2" fill="none" stroke="#222" stroke-width="1.3"/></svg>
<div class="t" style="left:601.00px;top:449.84px;font-size:12px;line-height:20px;color:#000;letter-spacing:0.185px;">Tạo nhóm (groups)</div>
<div style="position:absolute;left:770px;top:444px;width:220px;height:28px;background:#e1e1e1;border:2px solid #0078d7;box-sizing:border-box;"></div>
<div style="position:absolute;left:975px;top:449px;width:2px;height:18px;background:#555;"></div>
<svg style="position:absolute;left:977px;top:454px" width="11" height="8"><polygon points="1,1 10,1 5.5,7" fill="#000"/></svg>
<div class="t" style="left:816.00px;top:448.84px;font-size:12px;line-height:20px;color:#000;letter-spacing:0.163px;">Thêm vào danh mục</div>
<div style="position:absolute;left:998px;top:444px;width:94px;height:28px;background:#e1e1e1;border:1px solid #adadad;box-sizing:border-box;"></div>
<svg style="position:absolute;left:1003px;top:449px" width="18" height="18"><rect x="0" y="0" width="18" height="18" rx="2.5" fill="#e8403a"/><path d="M5 5 L13 13 M13 5 L5 13" stroke="#fff" stroke-width="2"/></svg>
<div class="t" style="left:1039.00px;top:448.84px;font-size:12px;line-height:20px;color:#000;letter-spacing:-0.006px;">Hủy bỏ</div>
<div style="position:absolute;left:158px;top:469px;width:222px;height:33px;background:#fff;border:1px solid #646464;border-top:none;box-sizing:border-box;box-shadow:1px 2px 3px rgba(0,0,0,0.25);"></div>
<div style="position:absolute;left:159px;top:469px;width:220px;height:16.5px;background:#0078d7;"></div>
<div class="t" style="left:162.00px;top:469.64px;font-size:12px;line-height:20px;color:#fff;letter-spacing:0.205px;">Đổ dữ liệu tại dòng đầu tiên</div>
<div class="t" style="left:162.00px;top:484.34px;font-size:12px;line-height:20px;color:#000;letter-spacing:-0.033px;">Đổ dữ liệu tại dòng được chỉ định</div>
<div class="t" style="left:367.00px;top:329.28px;font-size:16.5px;line-height:26px;color:#c8282a;letter-spacing:1.136px;">Lựa chọn để thêm vào danh mục</div>
<svg style="position:absolute;left:0;top:0;pointer-events:none" width="1126" height="524">
<g stroke="#e8141c" stroke-width="2.9" fill="#e8141c" stroke-linecap="round">
<line x1="374.6" y1="360" x2="322.1" y2="465.7"/>
<line x1="374.6" y1="360" x2="348.9" y2="481"/>
<polygon points="317.2,475.5 318.1,463.7 326.1,467.7" stroke-width="1.2" stroke-linejoin="round"/>
<polygon points="346.4,492.7 344.5,480.1 353.3,482" stroke-width="1.2" stroke-linejoin="round"/>
</g></svg>
</body></html>
